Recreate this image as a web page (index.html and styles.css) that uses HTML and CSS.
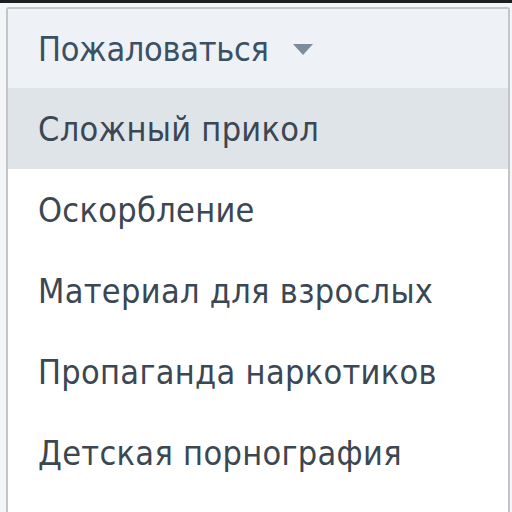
FILE: index.html
```html
<!DOCTYPE html>
<html lang="ru">
<head>
<meta charset="UTF-8" />
<title>Пожаловаться</title>
<link rel="stylesheet" href="styles.css">
</head>
<body>
<div class="top-strip"></div>
<div class="menu">
  <div class="menu-header">
    <span>Пожаловаться</span>
    <svg class="caret" width="20" height="11" viewBox="0 0 20 11"><path d="M0 0 H20 L10 11 Z" fill="#7d8c9c"/></svg>
  </div>
  <div class="menu-item active">Сложный прикол</div>
  <div class="menu-item">Оскорбление</div>
  <div class="menu-item">Материал для взрослых</div>
  <div class="menu-item">Пропаганда наркотиков</div>
  <div class="menu-item">Детская порнография</div>
</div>
</body>
</html>
```

FILE: styles.css
```css
* { box-sizing: border-box; margin: 0; padding: 0; }
body {
  background: #f4f5f6;
  font-family: "DejaVu Sans Condensed", "DejaVu Sans", sans-serif;
  color: #3e4a55;
  overflow: hidden;
  height: 512px;
}
.top-strip {
  height: 3px;
  background: #1c1f22;
}
.menu {
  margin: 4px 2px 0 6px;
  border: 2px solid #c2c6cc;
  border-bottom: none;
  border-radius: 3px 3px 0 0;
  background: #fff;
  min-height: 520px;
}
.menu-header {
  height: 79px;
  background: #eef1f5;
  display: flex;
  align-items: center;
  gap: 24px;
  padding-left: 30px;
  font-size: 34px;
  letter-spacing: -0.3px;
  color: #3a5064;
}
.caret { margin-top: 2px; }
.menu-item {
  height: 81px;
  display: flex;
  align-items: center;
  padding-left: 30px;
  font-size: 34px;
  letter-spacing: 0.3px;
  color: #3b4752;
}
.menu-item.active {
  background: #dfe4e9;
}
```
